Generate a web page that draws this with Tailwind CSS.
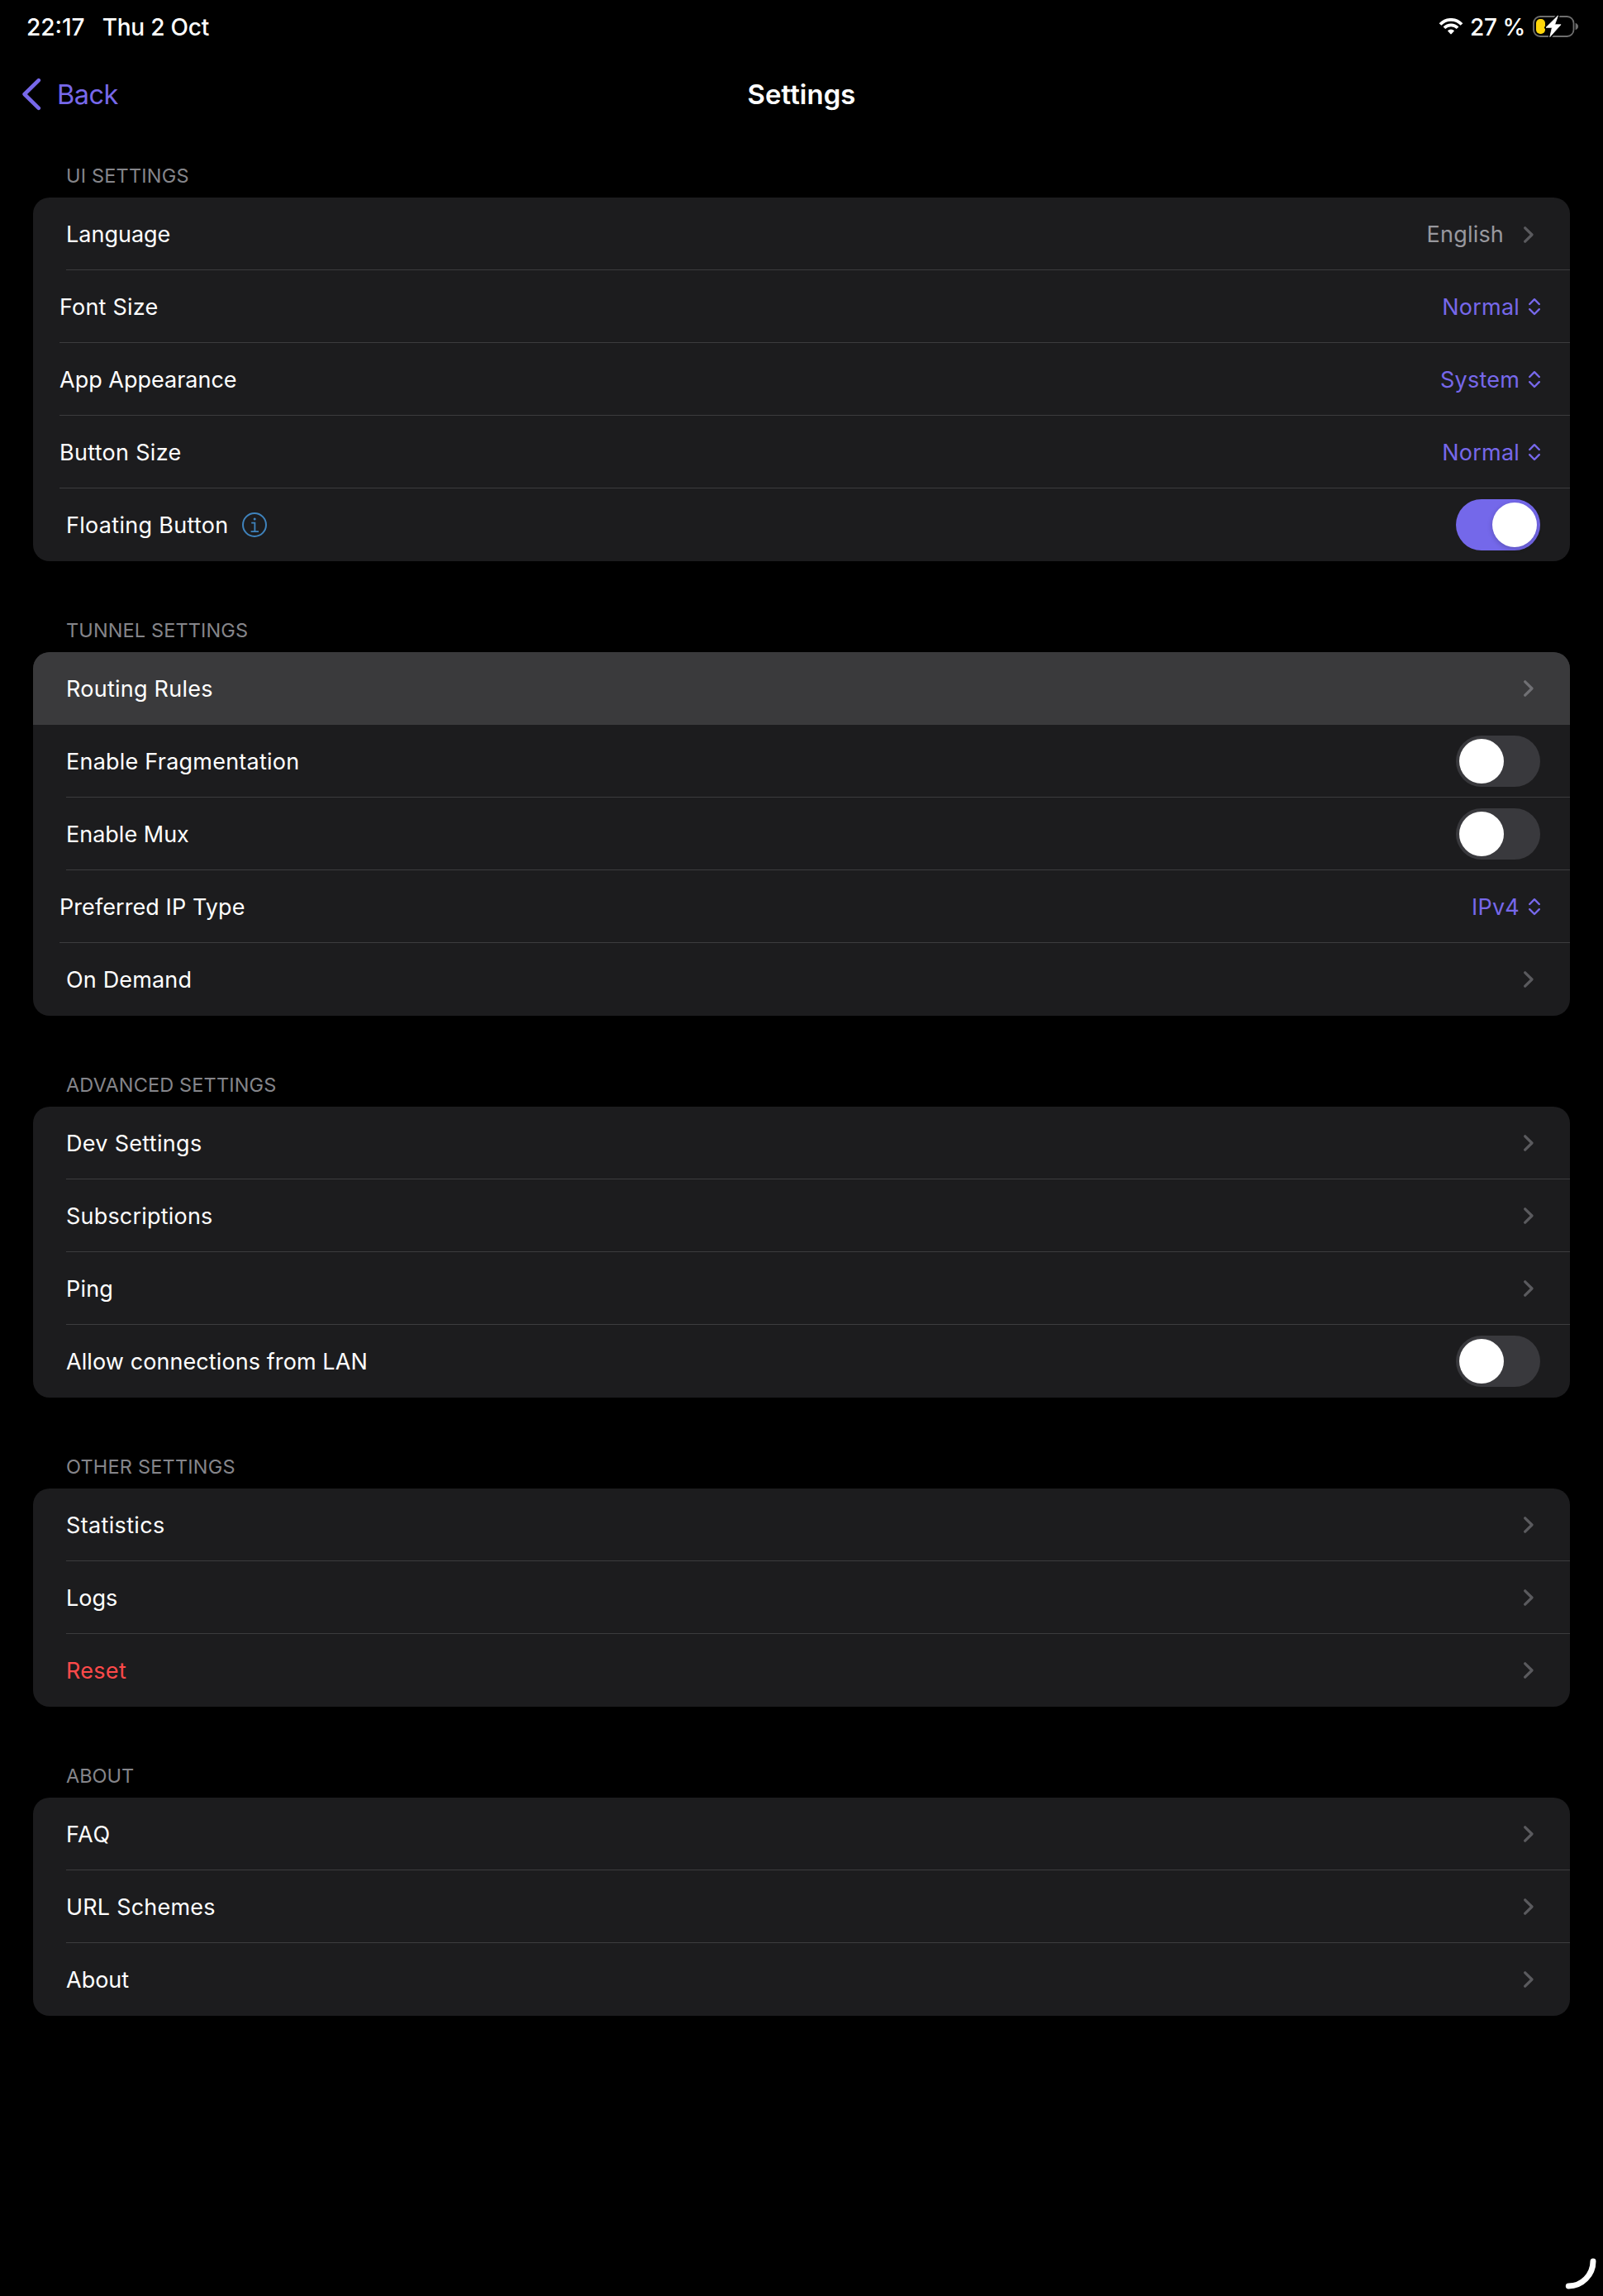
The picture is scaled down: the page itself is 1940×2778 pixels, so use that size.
<!DOCTYPE html>
<html lang="en">

<head>
    <meta charset="UTF-8">
    <meta name="viewport" content="width=device-width, initial-scale=1.0">
    <title>Settings</title>
    <script src="https://cdn.jsdelivr.net/npm/@tailwindcss/browser@4"></script>
</head>

<body class="bg-black text-white font-[Inter,sans-serif] select-none">
    <!-- Shared icons -->
    <svg class="hidden">
        <symbol id="chevron" viewBox="0 0 12 20">
            <path d="M1.7 1.8 L10 10 L1.7 18.2" fill="none" stroke="currentColor" stroke-width="3.2" stroke-linecap="round" stroke-linejoin="round" />
        </symbol>
        <symbol id="updown" viewBox="0 0 14 22">
            <path d="M1.2 8 L7 2.2 L12.8 8 M1.2 14.2 L7 20 L12.8 14.2" fill="none" stroke="currentColor" stroke-width="2.4" stroke-linecap="round" stroke-linejoin="round" />
        </symbol>
    </svg>

    <div class="relative h-[2778px] overflow-hidden">

        <!-- Status bar -->
        <div class="flex h-16 items-center justify-between pl-8 pr-[29px] text-[28px] font-medium">
            <div class="flex gap-[21px] pt-px">
                <span>22:17</span>
                <span class="tracking-[-0.2px]">Thu 2 Oct</span>
            </div>
            <div class="flex items-center">
                <svg class="mr-2 h-5 w-[30px]" viewBox="0 0 30 20">
                    <g fill="none" stroke="white" stroke-width="3.7">
                        <path d="M2 7.6 A17.5 17.5 0 0 1 28 7.6" />
                        <path d="M6.9 11.8 A11.3 11.3 0 0 1 23.1 11.8" />
                    </g>
                    <path d="M10.9 15.2 A6 6 0 0 1 19.1 15.2 L15.7 19 Q15 19.8 14.3 19 Z" fill="white" />
                </svg>
                <span class="pt-px tracking-[-0.4px]">27 %</span>
                <svg class="ml-[9px] h-7 w-14" viewBox="0 0 56 28">
                    <rect x="1" y="2" width="48.5" height="24" rx="8" fill="none" stroke="#6e6e6e" stroke-width="1.8" />
                    <path d="M51.6 9.8 Q55 11 55 14 Q55 17 51.6 18.2 Z" fill="#6e6e6e" />
                    <rect x="4" y="5" width="11" height="18" rx="5" fill="#ffd60a" />
                    <path d="M30.5 1 L16 15.3 H23.4 L20.8 26.6 L34 11.8 H26.6 Z" fill="white" stroke="black" stroke-width="4" stroke-linejoin="round" />
                    <path d="M30.5 1 L16 15.3 H23.4 L20.8 26.6 L34 11.8 H26.6 Z" fill="white" stroke="white" stroke-width="0.8" stroke-linejoin="round" />
                </svg>
            </div>
        </div>

        <!-- Navigation -->
        <div class="grid h-[100px] grid-cols-3 items-center">
            <a href="#" class="flex items-center gap-[19px] pl-[26px] text-[#7768ea]">
                <svg class="h-10 w-6" viewBox="0 0 24 40">
                    <path d="M20.8 3.2 L3.6 20 L20.8 36.8" fill="none" stroke="currentColor" stroke-width="4.6" stroke-linecap="round" stroke-linejoin="round" />
                </svg>
                <span class="pt-0.5 text-[32.5px] tracking-[-0.5px]">Back</span>
            </a>
            <h1 class="pt-0.5 text-center text-[33px] font-semibold">Settings</h1>
        </div>

        <div class="px-10">
            <!-- UI settings -->
            <h2 class="pl-10 pt-[31px] pb-[9px] text-[23.5px] leading-[35px] tracking-[0.2px] text-[#85858a]">UI SETTINGS</h2>
            <div class="overflow-hidden rounded-[20px] bg-[#1c1c1e] text-[27px] leading-[42px]">
                <div class="pl-10">
                    <div class="flex h-22 items-center justify-between pr-11 shadow-[inset_0_-1px_#3c3c3e]">
                        <span class="pt-px">Language</span>
                        <span class="flex items-center gap-[24px] pt-px tracking-[0.2px] text-[#98989e]">English
                            <svg class="h-5 w-3 text-[#5a5a5e]"><use href="#chevron" /></svg>
                        </span>
                    </div>
                </div>
                <div class="pl-8">
                    <div class="flex h-22 items-center justify-between pr-9 shadow-[inset_0_-1px_#3c3c3e]">
                        <span class="pt-px tracking-[0.2px]">Font Size</span>
                        <span class="flex items-center gap-[11px] pt-px tracking-[0.2px] text-[#7768ea]">Normal
                            <svg class="-mt-px h-[22px] w-3.5"><use href="#updown" /></svg>
                        </span>
                    </div>
                </div>
                <div class="pl-8">
                    <div class="flex h-22 items-center justify-between pr-9 shadow-[inset_0_-1px_#3c3c3e]">
                        <span class="pt-px">App Appearance</span>
                        <span class="flex items-center gap-[11px] pt-px tracking-[0.2px] text-[#7768ea]">System
                            <svg class="-mt-px h-[22px] w-3.5"><use href="#updown" /></svg>
                        </span>
                    </div>
                </div>
                <div class="pl-8">
                    <div class="flex h-22 items-center justify-between pr-9 shadow-[inset_0_-1px_#3c3c3e]">
                        <span class="pt-px tracking-[0.3px]">Button Size</span>
                        <span class="flex items-center gap-[11px] pt-px tracking-[0.2px] text-[#7768ea]">Normal
                            <svg class="-mt-px h-[22px] w-3.5"><use href="#updown" /></svg>
                        </span>
                    </div>
                </div>
                <div class="pl-10">
                    <div class="flex h-22 items-center justify-between pr-9">
                        <span class="flex items-center gap-4 pt-px tracking-[0.3px]">Floating Button
                            <svg class="-mt-px h-[30px] w-[30px]" viewBox="0 0 30 30" fill="none" stroke="#3f83bd" stroke-width="2">
                                <circle cx="15" cy="15" r="14" />
                                <path d="M11.2 12.7 H15.4 V23 M10.6 23.2 H20" stroke-width="1.8" />
                                <circle cx="15.2" cy="8" r="1.5" fill="#3f83bd" stroke="none" />
                            </svg>
                        </span>
                        <span class="flex h-[62px] w-[102px] justify-end rounded-full bg-[#7468ea] p-1">
                            <span class="size-[54px] rounded-full bg-white shadow-[0_2px_6px_rgba(0,0,0,0.2)]"></span>
                        </span>
                    </div>
                </div>
            </div>

            <!-- Tunnel settings -->
            <h2 class="pl-10 pt-[66px] pb-[9px] text-[23.5px] leading-[35px] tracking-[0.13px] text-[#85858a]">TUNNEL SETTINGS</h2>
            <div class="overflow-hidden rounded-[20px] bg-[#1c1c1e] text-[27px] leading-[42px]">
                <div class="bg-[#3a3a3c] pl-10">
                    <div class="flex h-22 items-center justify-between pr-11">
                        <span class="pt-px tracking-[0.25px]">Routing Rules</span>
                        <svg class="h-5 w-3 text-[#707074]"><use href="#chevron" /></svg>
                    </div>
                </div>
                <div class="pl-10">
                    <div class="flex h-22 items-center justify-between pr-9 shadow-[inset_0_-1px_#3c3c3e]">
                        <span class="pt-px tracking-[0.23px]">Enable Fragmentation</span>
                        <span class="flex h-[62px] w-[102px] rounded-full bg-[#39393d] p-1">
                            <span class="size-[54px] rounded-full bg-white"></span>
                        </span>
                    </div>
                </div>
                <div class="pl-10">
                    <div class="flex h-22 items-center justify-between pr-9 shadow-[inset_0_-1px_#3c3c3e]">
                        <span class="pt-px">Enable Mux</span>
                        <span class="flex h-[62px] w-[102px] rounded-full bg-[#39393d] p-1">
                            <span class="size-[54px] rounded-full bg-white"></span>
                        </span>
                    </div>
                </div>
                <div class="pl-8">
                    <div class="flex h-22 items-center justify-between pr-9 shadow-[inset_0_-1px_#3c3c3e]">
                        <span class="pt-px tracking-[0.08px]">Preferred IP Type</span>
                        <span class="flex items-center gap-[11px] pt-px tracking-[0.2px] text-[#7768ea]">IPv4
                            <svg class="-mt-px h-[22px] w-3.5"><use href="#updown" /></svg>
                        </span>
                    </div>
                </div>
                <div class="pl-10">
                    <div class="flex h-22 items-center justify-between pr-11">
                        <span class="pt-px tracking-[0.15px]">On Demand</span>
                        <svg class="h-5 w-3 text-[#5a5a5e]"><use href="#chevron" /></svg>
                    </div>
                </div>
            </div>

            <!-- Advanced settings -->
            <h2 class="pl-10 pt-[66px] pb-[9px] text-[23.5px] leading-[35px] tracking-[0.15px] text-[#85858a]">ADVANCED SETTINGS</h2>
            <div class="overflow-hidden rounded-[20px] bg-[#1c1c1e] text-[27px] leading-[42px]">
                <div class="pl-10">
                    <div class="flex h-22 items-center justify-between pr-11 shadow-[inset_0_-1px_#3c3c3e]">
                        <span class="pt-px tracking-[0.3px]">Dev Settings</span>
                        <svg class="h-5 w-3 text-[#5a5a5e]"><use href="#chevron" /></svg>
                    </div>
                </div>
                <div class="pl-10">
                    <div class="flex h-22 items-center justify-between pr-11 shadow-[inset_0_-1px_#3c3c3e]">
                        <span class="pt-px tracking-[0.2px]">Subscriptions</span>
                        <svg class="h-5 w-3 text-[#5a5a5e]"><use href="#chevron" /></svg>
                    </div>
                </div>
                <div class="pl-10">
                    <div class="flex h-22 items-center justify-between pr-11 shadow-[inset_0_-1px_#3c3c3e]">
                        <span class="pt-px tracking-[0.2px]">Ping</span>
                        <svg class="h-5 w-3 text-[#5a5a5e]"><use href="#chevron" /></svg>
                    </div>
                </div>
                <div class="pl-10">
                    <div class="flex h-22 items-center justify-between pr-9">
                        <span class="pt-px tracking-[0.09px]">Allow connections from LAN</span>
                        <span class="flex h-[62px] w-[102px] rounded-full bg-[#39393d] p-1">
                            <span class="size-[54px] rounded-full bg-white"></span>
                        </span>
                    </div>
                </div>
            </div>

            <!-- Other settings -->
            <h2 class="pl-10 pt-[66px] pb-[9px] text-[23.5px] leading-[35px] tracking-[0.2px] text-[#85858a]">OTHER SETTINGS</h2>
            <div class="overflow-hidden rounded-[20px] bg-[#1c1c1e] text-[27px] leading-[42px]">
                <div class="pl-10">
                    <div class="flex h-22 items-center justify-between pr-11 shadow-[inset_0_-1px_#3c3c3e]">
                        <span class="pt-px tracking-[0.35px]">Statistics</span>
                        <svg class="h-5 w-3 text-[#5a5a5e]"><use href="#chevron" /></svg>
                    </div>
                </div>
                <div class="pl-10">
                    <div class="flex h-22 items-center justify-between pr-11 shadow-[inset_0_-1px_#3c3c3e]">
                        <span class="pt-px">Logs</span>
                        <svg class="h-5 w-3 text-[#5a5a5e]"><use href="#chevron" /></svg>
                    </div>
                </div>
                <div class="pl-10">
                    <div class="flex h-22 items-center justify-between pr-11">
                        <span class="pt-px tracking-[0.3px] text-[#ff4a4a]">Reset</span>
                        <svg class="h-5 w-3 text-[#5a5a5e]"><use href="#chevron" /></svg>
                    </div>
                </div>
            </div>

            <!-- About -->
            <h2 class="pl-10 pt-[66px] pb-[9px] text-[23.5px] leading-[35px] text-[#85858a]">ABOUT</h2>
            <div class="overflow-hidden rounded-[20px] bg-[#1c1c1e] text-[27px] leading-[42px]">
                <div class="pl-10">
                    <div class="flex h-22 items-center justify-between pr-11 shadow-[inset_0_-1px_#3c3c3e]">
                        <span class="pt-px tracking-[0.6px]">FAQ</span>
                        <svg class="h-5 w-3 text-[#5a5a5e]"><use href="#chevron" /></svg>
                    </div>
                </div>
                <div class="pl-10">
                    <div class="flex h-22 items-center justify-between pr-11 shadow-[inset_0_-1px_#3c3c3e]">
                        <span class="pt-px tracking-[0.2px]">URL Schemes</span>
                        <svg class="h-5 w-3 text-[#5a5a5e]"><use href="#chevron" /></svg>
                    </div>
                </div>
                <div class="pl-10">
                    <div class="flex h-22 items-center justify-between pr-11">
                        <span class="pt-px">About</span>
                        <svg class="h-5 w-3 text-[#5a5a5e]"><use href="#chevron" /></svg>
                    </div>
                </div>
            </div>
        </div>

        <!-- Corner grab handle -->
        <svg class="absolute right-2 bottom-2 h-[38px] w-[38px]" viewBox="0 0 38 38">
            <path d="M34 4 A30 30 0 0 1 4.3 34" fill="none" stroke="white" stroke-width="7" stroke-linecap="round" />
        </svg>
    </div>
</body>

</html>
